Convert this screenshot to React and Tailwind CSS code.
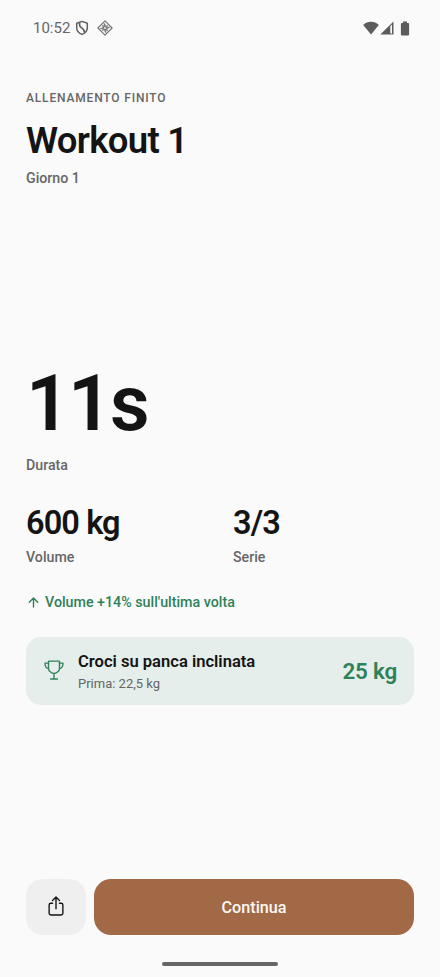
import { IoArrowUp, IoShareOutline, IoTrophyOutline } from "react-icons/io5";

// Icone di sistema nella barra di stato
const ShieldIcon = () => (
  <svg className="w-[14px] h-4" viewBox="0 0 14 16" fill="none" stroke="#606060">
    <path
      d="M7 1.4 1.7 3.2v4.6c0 3 2.2 5.5 5.3 6.6 3.1-1.1 5.3-3.6 5.3-6.6V3.2Z"
      strokeWidth="1.5"
      strokeLinejoin="round"
    />
    <path d="M4.6 2.8v2.5c0 2.8 5.4 2.6 4.7 7.2" strokeWidth="1.7" />
  </svg>
);

const DiamondIcon = () => (
  <svg className="w-4 h-4" viewBox="0 0 16 16" fill="none" stroke="#707070">
    <path d="M8 .9 15.1 8 8 15.1.9 8Z" strokeWidth="1.1" strokeLinejoin="round" />
    <path
      d="M7 3.4l1.4 2.8M12.6 7l-2.8 1.4M9 12.6 7.6 9.8M3.4 9l2.8-1.4M5.2 5.6l2 .8M10.4 5.2l-.8 2M10.8 10.4l-2-.8M5.6 10.8l.8-2"
      strokeWidth="1.3"
    />
    <circle cx="8" cy="8" r="1.5" strokeWidth="1" />
  </svg>
);

const WifiIcon = () => (
  <svg className="w-4 h-[14px]" viewBox="0 0 16 14" fill="#5c5c5c">
    <path d="M8 13.6.2 3.9C2.4 1.9 5 .8 8 .8s5.6 1.1 7.8 3.1Z" />
  </svg>
);

const SignalIcon = () => (
  <svg className="w-[14px] h-[14px]" viewBox="0 0 14 14" fill="#5c5c5c">
    <path
      fillRule="evenodd"
      d="M.3 13.6 13.5.5v13.1ZM10.3 5.3v7.1h1.7V3.6Z"
    />
  </svg>
);

const BatteryIcon = () => (
  <svg className="w-[10px] h-[15px]" viewBox="0 0 10 15" fill="#5c5c5c">
    <path d="M3 .5h4v1.4h1.2c.5 0 .9.4.9.9v10.8c0 .5-.4.9-.9.9H1.8c-.5 0-.9-.4-.9-.9V2.8c0-.5.4-.9.9-.9H3Z" />
  </svg>
);

const StatusBar = () => (
  <div className="flex h-14 shrink-0 items-center justify-between pl-[33px] pr-[30px]">
    <div className="flex items-center">
      <span className="text-[15px] text-[#666666]">10:52</span>
      <div className="ml-[5px]">
        <ShieldIcon />
      </div>
      <div className="ml-[8px]">
        <DiamondIcon />
      </div>
    </div>
    <div className="flex items-center">
      <WifiIcon />
      <div className="ml-[1px] mr-[6px]">
        <SignalIcon />
      </div>
      <BatteryIcon />
    </div>
  </div>
);

const Stat = ({ value, label }) => (
  <div className="flex-1">
    <p className="text-[32.5px] leading-[38px] font-semibold tracking-[-0.9px]">
      {value}
    </p>
    <p className="mt-[5px] text-[14.2px] leading-5 font-medium text-[#666666]">
      {label}
    </p>
  </div>
);

const RecordCard = ({ name, previous, value }) => (
  <div className="mt-[25px] flex h-[68px] items-center rounded-[15px] bg-[#e5eeea] pl-[17px] pr-[17px]">
    <IoTrophyOutline className="w-[22px] h-[22px] shrink-0 -translate-y-[1px] text-[#2f8159]" />
    <div className="ml-[13px] flex-1 pt-[2px]">
      <p className="text-[16.6px] leading-[22px] font-semibold tracking-[-0.02px]">
        {name}
      </p>
      <p className="mt-[2px] text-[13px] leading-[18px] text-[#666666]">
        {previous}
      </p>
    </div>
    <p className="text-[22.4px] leading-7 font-semibold tracking-[-0.2px] text-[#2f8159]">
      {value}
    </p>
  </div>
);

const App = () => (
  <div className="flex h-[977px] w-full flex-col bg-[#fafafa] font-[Roboto,sans-serif] text-[#141414]">
    <StatusBar />

    <header className="px-[26px] pt-[34px]">
      <p className="text-[12px] leading-4 font-medium tracking-[0.83px] text-[#666666]">
        ALLENAMENTO FINITO
      </p>
      <h1 className="mt-[13px] text-[36.5px] leading-[44px] font-semibold tracking-[-0.7px]">
        Workout 1
      </h1>
      <p className="mt-[5px] text-[14.2px] leading-5 font-medium text-[#666666]">
        Giorno 1
      </p>
    </header>

    {/* Riepilogo allenamento */}
    <main className="flex flex-1 flex-col justify-center px-[26px]">
      <p className="text-[77px] leading-[84px] font-semibold tracking-[-2px]">
        11s
      </p>
      <p className="mt-[9px] text-[14.2px] leading-5 font-medium text-[#666666]">
        Durata
      </p>
      <div className="mt-[29px] flex gap-[26px]">
        <Stat value="600 kg" label="Volume" />
        <Stat value="3/3" label="Serie" />
      </div>
      <div className="mt-[25px] flex items-center gap-1 text-[#2f8159]">
        <IoArrowUp className="w-[15px] h-[15px]" />
        <p className="text-[14.25px] leading-5 font-medium">
          Volume +14% sull'ultima volta
        </p>
      </div>
      <RecordCard
        name="Croci su panca inclinata"
        previous="Prima: 22,5 kg"
        value="25 kg"
      />
    </main>

    <footer className="flex gap-[8px] px-[26px]">
      <button className="flex h-14 w-[60px] items-center justify-center rounded-[17px] bg-[#efefef]">
        <IoShareOutline className="w-[22px] h-[22px] -translate-y-[1px]" />
      </button>
      <button className="h-14 flex-1 rounded-[17px] bg-[#a16946] pt-[2px] text-[16.2px] font-medium text-[#fdf8f4]">
        Continua
      </button>
    </footer>

    {/* Barra gestuale */}
    <div className="flex h-[42px] shrink-0 justify-center pt-[27px]">
      <div className="h-[4px] w-[116px] rounded-full bg-[#666666]" />
    </div>
  </div>
);

export default App;
